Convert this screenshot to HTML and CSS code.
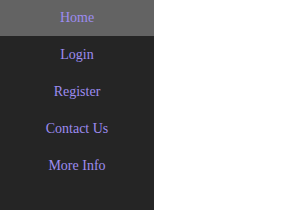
FILE: index.html
```html
<!DOCTYPE html>
<html lang="en">
<head>
    <meta charset="UTF-8">
    <title>Side Nav</title>
    <link rel="stylesheet" href="styles.css">
</head>
<body>
    <div class="sidenav">
        <a href="#" class="active">Home</a>
        <a href="#">Login</a>
        <a href="#">Register</a>
        <a href="#">Contact Us</a>
        <a href="#">More Info</a>
    </div>
</body>
</html>
```

FILE: styles.css
```css
body {
    margin: 0;
    background: white;
}
.sidenav {
    width: 154px;
    height: 210px;
    background: #252525;
}
.sidenav a {
    display: block;
    height: 37px;
    line-height: 38px;
    text-align: center;
    font-family: "Liberation Serif", "Times New Roman", serif;
    font-size: 14px;
    color: #9d8cf0;
    text-decoration: none;
}
.sidenav a.active {
    height: 36px;
    line-height: 36px;
    background: #636363;
}
```
